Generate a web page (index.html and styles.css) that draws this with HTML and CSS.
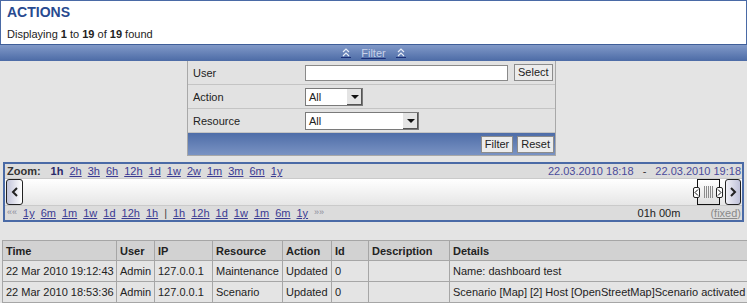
FILE: index.html
```html
<!DOCTYPE html>
<html lang="en">
<head>
    <meta charset="UTF-8">
    <title>Actions</title>
    <link rel="stylesheet" href="styles.css">
</head>
<body>
    <div class="page-header">
        <h1>ACTIONS</h1>
        <p>Displaying <b>1</b> to <b>19</b> of <b>19</b> found</p>
    </div>

    <div class="filter-head">
        <a class="arrows" href="#"><svg width="8" height="9" viewBox="0 0 8 9"><path d="M1 4 L4 1 L7 4 M1 8 L4 5 L7 8" fill="none" stroke="#e8ecf6" stroke-width="1.2"/></svg></a>
        <a class="filter-link" href="#">Filter</a>
        <a class="arrows" href="#"><svg width="8" height="9" viewBox="0 0 8 9"><path d="M1 4 L4 1 L7 4 M1 8 L4 5 L7 8" fill="none" stroke="#e8ecf6" stroke-width="1.2"/></svg></a>
    </div>

    <div class="filter-box">
        <div class="form-row">
            <label>User</label>
            <div class="field">
                <span class="text-input"></span>
                <span class="btn">Select</span>
            </div>
        </div>
        <div class="form-row">
            <label>Action</label>
            <div class="field">
                <span class="combo small"><span class="value">All</span><span class="drop"></span></span>
            </div>
        </div>
        <div class="form-row">
            <label>Resource</label>
            <div class="field">
                <span class="combo wide"><span class="value">All</span><span class="drop"></span></span>
            </div>
        </div>
        <div class="form-footer">
            <span class="btn">Filter</span>
            <span class="btn">Reset</span>
        </div>
    </div>

    <div class="timeline">
        <div class="zoom-row">
            <div class="links">
                <b class="label">Zoom:</b>
                <span class="current">1h</span>
                <a href="#">2h</a><a href="#">3h</a><a href="#">6h</a><a href="#">12h</a>
                <a href="#">1d</a><a href="#">1w</a><a href="#">2w</a><a href="#">1m</a>
                <a href="#">3m</a><a href="#">6m</a><a href="#">1y</a>
            </div>
            <div class="period">
                <a href="#">22.03.2010 18:18</a>
                <span class="dash">-</span>
                <a href="#">22.03.2010 19:18</a>
            </div>
        </div>
        <div class="scroll-row">
            <span class="arrow-btn left"><svg width="8" height="10" viewBox="0 0 8 10"><path d="M6 1 L2 5 L6 9" fill="none" stroke="#222" stroke-width="2"/></svg></span>
            <div class="track">
                <div class="handle">
                    <span class="nub l"><svg width="5" height="7" viewBox="0 0 5 7"><path d="M4 0.5 L1 3.5 L4 6.5" fill="none" stroke="#111" stroke-width="1"/></svg></span>
                    <span class="grip"></span>
                    <span class="nub r"><svg width="5" height="7" viewBox="0 0 5 7"><path d="M1 0.5 L4 3.5 L1 6.5" fill="none" stroke="#111" stroke-width="1"/></svg></span>
                </div>
            </div>
            <span class="arrow-btn right"><svg width="8" height="10" viewBox="0 0 8 10"><path d="M2 1 L6 5 L2 9" fill="none" stroke="#222" stroke-width="2"/></svg></span>
        </div>
        <div class="nav-row">
            <div class="links">
                <span class="muted">&laquo;&laquo;</span>
                <a href="#">1y</a><a href="#">6m</a><a href="#">1m</a><a href="#">1w</a>
                <a href="#">1d</a><a href="#">12h</a><a href="#">1h</a>
                <span class="sep">|</span>
                <a href="#">1h</a><a href="#">12h</a><a href="#">1d</a><a href="#">1w</a>
                <a href="#">1m</a><a href="#">6m</a><a href="#">1y</a>
                <span class="muted">&raquo;&raquo;</span>
            </div>
            <div class="status">
                <span>01h 00m</span>
                <span class="fixed">(<u>fixed</u>)</span>
            </div>
        </div>
    </div>

    <table class="actions">
        <colgroup>
            <col style="width:114px"><col style="width:38px"><col style="width:58px">
            <col style="width:70px"><col style="width:49px"><col style="width:37px">
            <col style="width:81px"><col>
        </colgroup>
        <tr>
            <th>Time</th><th>User</th><th>IP</th><th>Resource</th>
            <th>Action</th><th>Id</th><th>Description</th><th>Details</th>
        </tr>
        <tr>
            <td>22 Mar 2010 19:12:43</td><td>Admin</td><td>127.0.0.1</td><td>Maintenance</td>
            <td>Updated</td><td>0</td><td></td><td>Name: dashboard test</td>
        </tr>
        <tr>
            <td>22 Mar 2010 18:53:36</td><td>Admin</td><td>127.0.0.1</td><td>Scenario</td>
            <td>Updated</td><td>0</td><td></td><td>Scenario [Map] [2] Host [OpenStreetMap]Scenario activated</td>
        </tr>
    </table>
</body>
</html>
```

FILE: styles.css
```css
body {
    margin: 0;
    background: #e4e4e4;
    font-family: "Liberation Sans", Arial, sans-serif;
    font-size: 11px;
    color: #222;
    overflow: hidden;
}
a {
    color: #3a3a92;
}
.page-header {
    background: #fff;
    border: 1px solid #4a6aa6;
    border-bottom: none;
    height: 44px;
    padding: 3px 6px 0;
    box-sizing: border-box;
}
.page-header h1 {
    margin: 0;
    font-size: 14px;
    line-height: 16px;
    color: #284a90;
}
.page-header p {
    margin: 8px 0 0;
    line-height: 13px;
}
.filter-head {
    height: 16px;
    border-top: 1px solid #3f5e98;
    background: linear-gradient(#8199c8, #4c6ba6);
    display: flex;
    justify-content: center;
    align-items: center;
    gap: 6px;
}
.filter-head a {
    color: #c8d2ea;
    text-decoration-color: #1c2f78;
}
.filter-head .arrows {
    display: flex;
    border-bottom: 1px solid #1c2f78;
    padding: 0 1px;
}
.filter-link {
    padding: 0 4px;
}
.filter-box {
    width: 369px;
    margin-left: 187px;
    border: 1px solid #a8a8a8;
    border-top: none;
    box-sizing: border-box;
}
.form-row {
    display: flex;
    align-items: center;
    height: 24px;
    border-bottom: 1px solid #c4c4c4;
    box-sizing: border-box;
    background: #e2e2e2;
}
.form-row label {
    width: 117px;
    padding-left: 5px;
    box-sizing: border-box;
}
.field {
    display: flex;
    align-items: center;
    gap: 6px;
}
.text-input {
    width: 203px;
    height: 16px;
    background: #fff;
    border: 1px solid #8a8a8a;
    box-sizing: border-box;
}
.btn {
    display: inline-block;
    padding: 0 3px;
    line-height: 15px;
    background: #ececec;
    border: 1px solid #8c8c8c;
    color: #222;
}
.combo {
    display: flex;
    height: 18px;
    background: #fff;
    border: 1px solid #7a7a7a;
    box-sizing: border-box;
}
.combo.small {
    width: 58px;
}
.combo.wide {
    width: 114px;
}
.combo .value {
    flex: 1;
    padding: 2px 0 0 3px;
}
.combo .drop {
    width: 15px;
    background: #e4e4e4;
    border-left: 1px solid #fff;
    box-shadow: inset -1px -1px 0 #555;
    position: relative;
}
.combo .drop::after {
    content: "";
    position: absolute;
    left: 4px;
    top: 6px;
    border: 4px solid transparent;
    border-top: 4px solid #111;
    border-bottom: none;
}
.form-footer {
    height: 22px;
    background: linear-gradient(#4e6da8, #7a93c3);
    display: flex;
    justify-content: flex-end;
    align-items: center;
    gap: 4px;
    padding-right: 1px;
}
.timeline {
    margin: 6px 3px 0;
    border: 2px solid #4a6aa6;
    background: #dcdcdc;
}
.zoom-row, .nav-row {
    display: flex;
    justify-content: space-between;
    align-items: center;
    height: 14px;
    padding: 0 1px 0 2px;
}
.links {
    display: flex;
    gap: 6px;
}
.links .label {
    color: #333;
    margin-right: 4px;
}
.links .current {
    font-weight: bold;
    color: #2a2a6a;
}
.period a {
    text-decoration: none;
    color: #4a4a9a;
}
.period .dash {
    margin: 0 6px;
    color: #333;
}
.scroll-row {
    display: flex;
    height: 26px;
    background: linear-gradient(#ffffff, #e6e6e6);
    border-top: 1px solid #cacaca;
    border-bottom: 1px solid #cacaca;
    padding: 0 1px;
}
.arrow-btn {
    width: 17px;
    border: 1px solid #222;
    border-radius: 3px;
    box-sizing: border-box;
    display: flex;
    align-items: center;
    justify-content: center;
}
.arrow-btn.left {
    background: linear-gradient(to right, #c2c4da, #ffffff);
}
.arrow-btn.right {
    width: 16px;
    background: linear-gradient(to right, #f0f0f6, #c0c2da);
    margin-left: 2px;
}
.track {
    flex: 1;
    display: flex;
    justify-content: flex-end;
}
.handle {
    display: flex;
    align-items: center;
    width: 30px;
}
.handle .grip {
    align-self: stretch;
    width: 23px;
    flex: none;
    margin: 0 -4px 0 -3px;
    box-sizing: border-box;
    border: 1px solid #111;
    background: repeating-linear-gradient(to right, #8a8a8a 0 1px, transparent 1px 2px) no-repeat center / 9px 12px,
        linear-gradient(#ffffff, #dedede);
}
.handle .nub {
    position: relative;
    z-index: 1;
    flex: none;
    width: 7px;
    height: 11px;
    border: 1px solid #222;
    border-radius: 2px;
    background: #fff;
    display: flex;
    align-items: center;
    justify-content: center;
    box-sizing: border-box;
}
.nav-row .muted {
    color: #8a8a9a;
    font-size: 9px;
}
.nav-row .sep {
    color: #444;
}
.status {
    display: flex;
    gap: 30px;
}
.status .fixed {
    color: #8a8a8a;
}
.actions {
    margin: 18px 0 0 2px;
    width: 746px;
    border-collapse: collapse;
    table-layout: fixed;
}
.actions th, .actions td {
    border: 1px solid #a6a6a6;
    text-align: left;
    padding: 0 3px;
    white-space: nowrap;
    overflow: hidden;
}
.actions th {
    height: 19px;
    background: #d2d2d2;
}
.actions td {
    height: 20px;
    background: #e4e4e4;
}
```
